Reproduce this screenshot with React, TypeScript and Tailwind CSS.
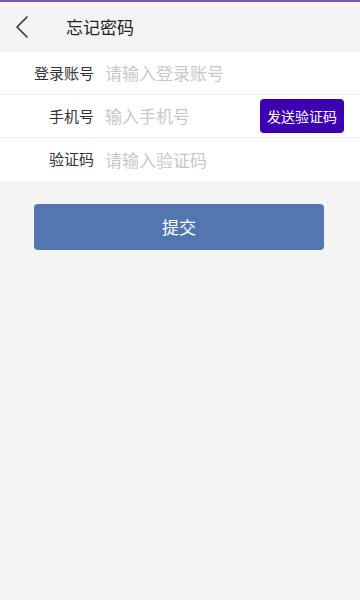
const FONT = "font-['Noto_Sans_CJK_SC','Noto_Sans',sans-serif]"

const ROWS = [
  { label: '登录账号', placeholder: '请输入登录账号' },
  { label: '手机号', placeholder: '输入手机号', code: true },
  { label: '验证码', placeholder: '请输入验证码' },
]

export default function App() {
  return (
    <div className={`min-h-[600px] bg-[#f4f4f4] ${FONT}`}>
      {/* Header */}
      <div className="border-t-2 border-[#7d5bb3]">
        <div className="h-[50px] flex items-center">
          <div className="w-[44px] pl-[14px] flex items-center">
            <svg width="16" height="24" viewBox="0 0 16 24" fill="none">
              <polyline points="13,2 3,12 13,22" stroke="#3a3a3a" strokeWidth="1.7" strokeLinecap="round" strokeLinejoin="round" />
            </svg>
          </div>
          <h1 className="ml-[22px] text-[17px] text-[#222]">忘记密码</h1>
        </div>
      </div>

      {/* Form */}
      <div className="bg-white">
        {ROWS.map((row, i) => (
          <div
            key={row.label}
            className={`h-[43px] flex items-center pr-4 ${i < ROWS.length - 1 ? 'border-b border-[#eeeeee]' : ''}`}
          >
            <label className="w-[94px] text-right text-[15px] text-[#333] shrink-0">{row.label}</label>
            <input
              className={`ml-[11px] flex-1 min-w-0 bg-transparent outline-none text-[17px] text-[#333] placeholder:text-[#c8c8c8] ${FONT}`}
              placeholder={row.placeholder}
            />
            {row.code && (
              <button className="h-[34px] px-[7px] rounded-[4px] bg-[#3c00b2] text-white text-[14px] shrink-0">
                发送验证码
              </button>
            )}
          </div>
        ))}
      </div>

      {/* Submit */}
      <div className="px-[34px] pt-[23px]">
        <button className="w-[290px] h-[46px] rounded-[4px] bg-[#5176b0] text-white text-[17px]">
          提交
        </button>
      </div>
    </div>
  )
}
